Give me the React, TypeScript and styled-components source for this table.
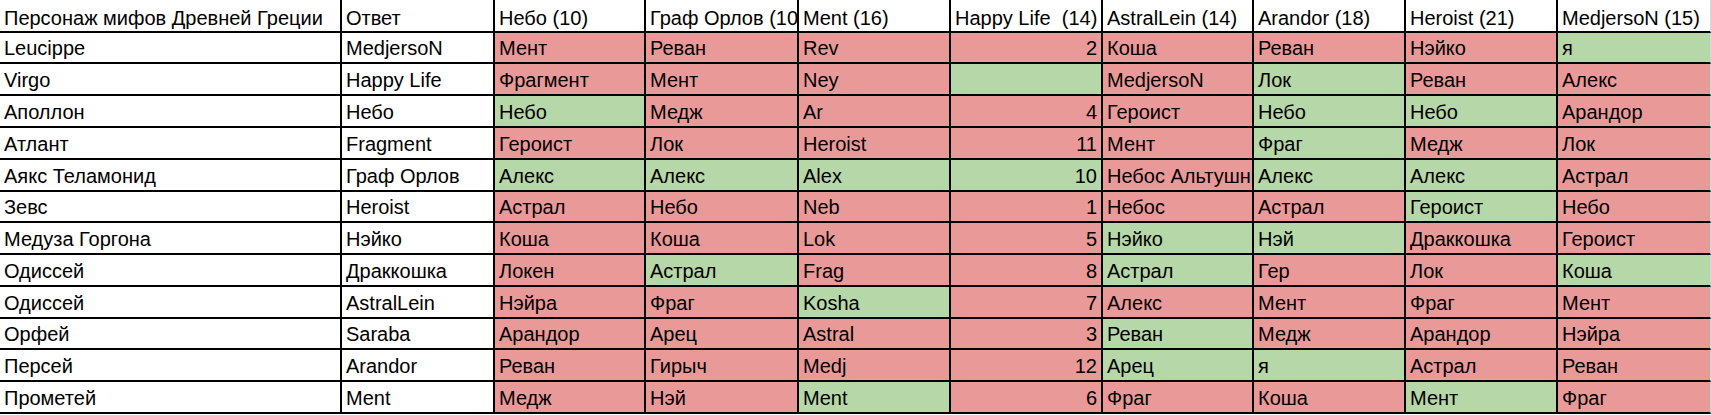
import React from 'react'
import styled, { createGlobalStyle } from 'styled-components'

const GlobalStyle = createGlobalStyle`
	html, body {
		margin: 0;
		padding: 0;
		background: #ffffff;
	}
	body {
		font-family: 'Liberation Sans', Arial, sans-serif;
	}
`

type Tone = 'red' | 'green'

const toneColors: Record<Tone, string> = {
	red: '#ea9999',
	green: '#b6d7a8',
}

const Sheet = styled.div`
	display: grid;
	grid-template-columns: 342px 153px 151px 153px 152px 152px 151px 152px 152px 153px;
	grid-template-rows: 32.7px repeat(12, 31.77px);
	width: 1711px;
	font-family: 'Liberation Sans', Arial, sans-serif;
	font-size: 20px;
	line-height: 20px;
	color: #000000;
`

const Cell = styled.div<{ $tone?: Tone; $numeric?: boolean; $last?: boolean }>`
	box-sizing: border-box;
	display: flex;
	align-items: flex-end;
	justify-content: ${(p) => (p.$numeric ? 'flex-end' : 'flex-start')};
	padding: 0 4px 4px 4px;
	background: ${(p) => (p.$tone ? toneColors[p.$tone] : '#ffffff')};
	border-right: ${(p) => (p.$last ? '1px solid #d6d6d6' : '2px solid #000000')};
	border-bottom: 2px solid #000000;
	white-space: pre;
	overflow: hidden;
	min-width: 0;
`

const HeaderCell = styled(Cell)`
	padding-bottom: 2.5px;
`

const headers = [
	'Персонаж мифов Древней Греции',
	'Ответ',
	'Небо (10)',
	'Граф Орлов (10)',
	'Ment (16)',
	'Happy Life  (14)',
	'AstralLein (14)',
	'Arandor (18)',
	'Heroist (21)',
	'MedjersoN (15)',
]

type Guess = [string, Tone]

interface Row {
	hero: string
	answer: string
	guesses: Guess[]
}

const R: Tone = 'red'
const G: Tone = 'green'

const rows: Row[] = [
	{ hero: 'Leucippe', answer: 'MedjersoN', guesses: [['Мент', R], ['Реван', R], ['Rev', R], ['2', R], ['Коша', R], ['Реван', R], ['Нэйко', R], ['я', G]] },
	{ hero: 'Virgo', answer: 'Happy Life', guesses: [['Фрагмент', R], ['Мент', R], ['Ney', R], ['', G], ['MedjersoN', R], ['Лок', G], ['Реван', R], ['Алекс', R]] },
	{ hero: 'Аполлон', answer: 'Небо', guesses: [['Небо', G], ['Медж', R], ['Ar', R], ['4', R], ['Героист', R], ['Небо', G], ['Небо', G], ['Арандор', R]] },
	{ hero: 'Атлант', answer: 'Fragment', guesses: [['Героист', R], ['Лок', R], ['Heroist', R], ['11', R], ['Мент', R], ['Фраг', G], ['Медж', R], ['Лок', R]] },
	{ hero: 'Аякс Теламонид', answer: 'Граф Орлов', guesses: [['Алекс', G], ['Алекс', G], ['Alex', G], ['10', G], ['Небос Альтушн', R], ['Алекс', G], ['Алекс', G], ['Астрал', R]] },
	{ hero: 'Зевс', answer: 'Heroist', guesses: [['Астрал', R], ['Небо', R], ['Neb', R], ['1', R], ['Небос', R], ['Астрал', R], ['Героист', G], ['Небо', R]] },
	{ hero: 'Медуза Горгона', answer: 'Нэйко', guesses: [['Коша', R], ['Коша', R], ['Lok', R], ['5', R], ['Нэйко', G], ['Нэй', G], ['Драккошка', R], ['Героист', R]] },
	{ hero: 'Одиссей', answer: 'Драккошка', guesses: [['Локен', R], ['Астрал', G], ['Frag', R], ['8', R], ['Астрал', G], ['Гер', R], ['Лок', R], ['Коша', G]] },
	{ hero: 'Одиссей', answer: 'AstralLein', guesses: [['Нэйра', R], ['Фраг', R], ['Kosha', G], ['7', R], ['Алекс', R], ['Мент', R], ['Фраг', R], ['Мент', R]] },
	{ hero: 'Орфей', answer: 'Saraba', guesses: [['Арандор', R], ['Арец', R], ['Astral', R], ['3', R], ['Реван', G], ['Медж', R], ['Арандор', R], ['Нэйра', R]] },
	{ hero: 'Персей', answer: 'Arandor', guesses: [['Реван', R], ['Гирыч', R], ['Medj', R], ['12', R], ['Арец', G], ['я', G], ['Астрал', R], ['Реван', R]] },
	{ hero: 'Прометей', answer: 'Ment', guesses: [['Медж', R], ['Нэй', R], ['Ment', G], ['6', R], ['Фраг', R], ['Коша', R], ['Мент', G], ['Фраг', R]] },
]

// the Happy Life column holds numbers, aligned right like a spreadsheet
const NUMERIC_GUESS = 3

const App: React.FC = () => {
	return (
		<>
			<GlobalStyle />
			<Sheet>
				{headers.map((title, index) => (
					<HeaderCell key={`h-${index}`} $last={index === headers.length - 1}>
						{title}
					</HeaderCell>
				))}
				{rows.map((row, rowIndex) => (
					<React.Fragment key={rowIndex}>
						<Cell>{row.hero}</Cell>
						<Cell>{row.answer}</Cell>
						{row.guesses.map(([text, tone], index) => (
							<Cell
								key={index}
								$tone={tone}
								$numeric={index === NUMERIC_GUESS}
								$last={index === row.guesses.length - 1}
							>
								{text}
							</Cell>
						))}
					</React.Fragment>
				))}
			</Sheet>
		</>
	)
}

export default App
